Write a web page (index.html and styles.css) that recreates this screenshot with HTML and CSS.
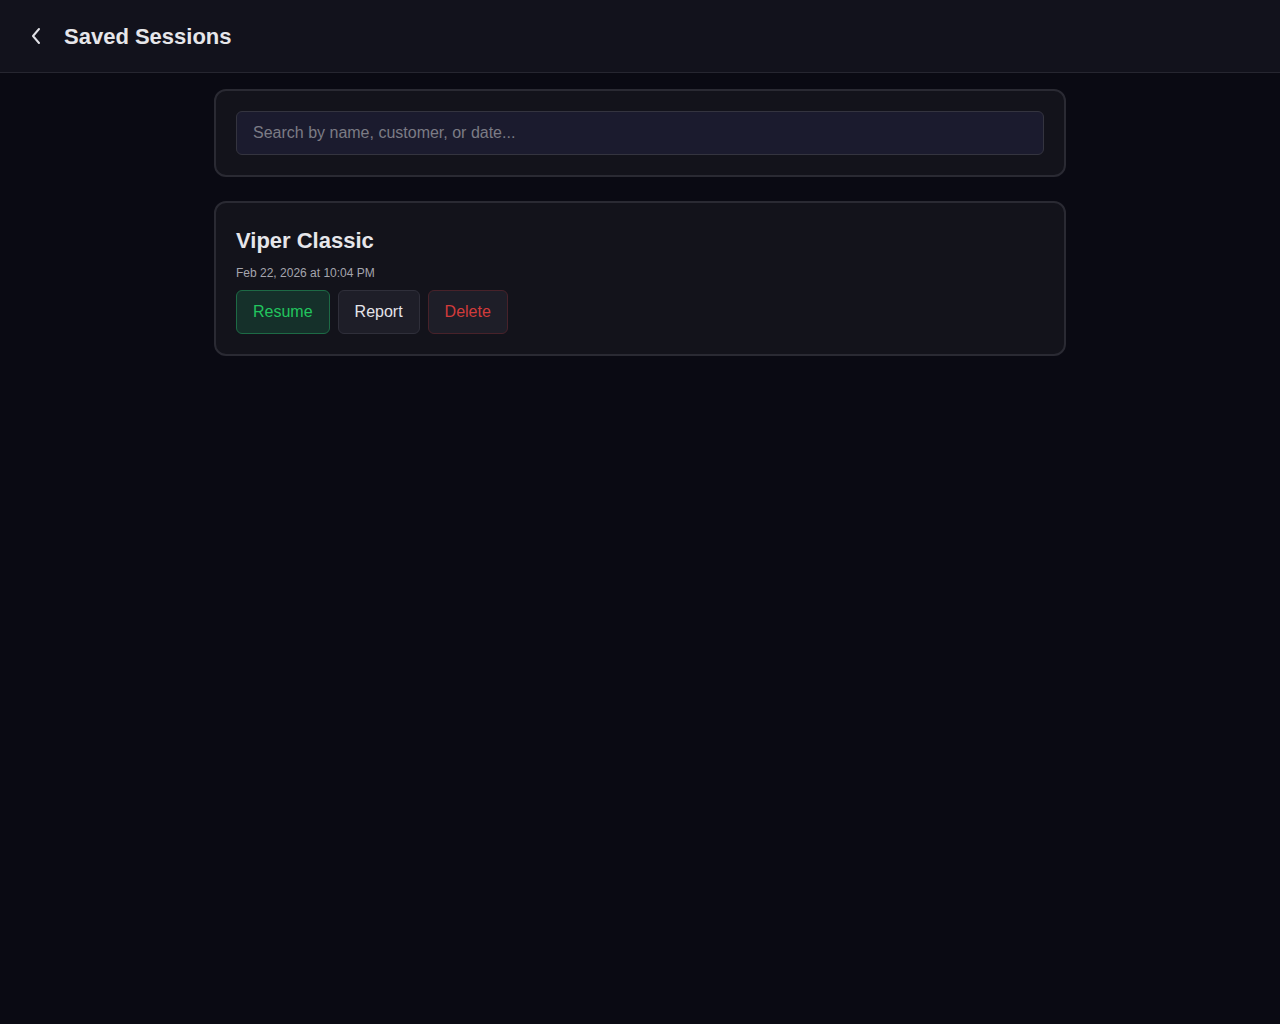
FILE: index.html
```html
<!DOCTYPE html>
<html lang="en">
<head>
<meta charset="utf-8">
<title>Saved Sessions</title>
<link rel="stylesheet" href="styles.css">
</head>
<body>
<header class="topbar">
  <button class="back" aria-label="Back">
    <svg width="12" height="18" viewBox="0 0 12 18" fill="none" stroke="currentColor" stroke-width="2" stroke-linecap="round" stroke-linejoin="round"><path d="M9 2 L3 9 L9 16"/></svg>
  </button>
  <h1 class="title">Saved Sessions</h1>
</header>
<main class="content">
  <section class="card search-card">
    <input class="search" type="text" placeholder="Search by name, customer, or date...">
  </section>
  <section class="card session">
    <h2 class="session-name">Viper Classic</h2>
    <div class="session-date">Feb 22, 2026 at 10:04 PM</div>
    <div class="actions">
      <button class="btn btn-resume">Resume</button>
      <button class="btn btn-report">Report</button>
      <button class="btn btn-delete">Delete</button>
    </div>
  </section>
</main>
</body>
</html>
```

FILE: styles.css
```css
* { box-sizing: border-box; }
html, body { margin: 0; padding: 0; }
body {
  background: #0a0a13;
  font-family: "Liberation Sans", Arial, sans-serif;
  color: #e6e6ea;
  min-height: 1024px;
}
.topbar {
  height: 73px;
  background: #12121c;
  border-bottom: 1px solid #262630;
  display: flex;
  align-items: center;
  padding-left: 24px;
  gap: 10px;
}
.back {
  background: none;
  border: none;
  color: #e0e0e6;
  width: 24px;
  height: 24px;
  padding: 0;
  display: flex;
  align-items: center;
  justify-content: center;
  cursor: pointer;
}
.title {
  margin: 2px 0 0 6px;
  font-size: 22px;
  font-weight: 700;
  color: #e6e6ea;
}
.content {
  width: 852px;
  margin: 16px auto 0;
  display: flex;
  flex-direction: column;
  gap: 24px;
}
.card {
  background: #13131b;
  border: 2px solid #2a2a33;
  border-radius: 12px;
  padding: 20px;
}
.search {
  display: block;
  width: 100%;
  height: 44px;
  background: #1b1b2e;
  border: 1px solid #34343f;
  border-radius: 6px;
  padding: 0 16px;
  font-family: "Liberation Sans", Arial, sans-serif;
  font-size: 16px;
  color: #e6e6ea;
  outline: none;
}
.search::placeholder { color: #7b7b85; }
.session-name {
  margin: 2px 0 0;
  font-size: 22px;
  line-height: 32px;
  font-weight: 700;
  color: #e6e6ea;
}
.session-date {
  margin-top: 8px;
  font-size: 12px;
  line-height: 16px;
  color: #a5a5ae;
}
.actions {
  display: flex;
  gap: 8px;
  margin-top: 9px;
}
.btn {
  height: 44px;
  padding: 0 16px;
  border-radius: 6px;
  font-family: "Liberation Sans", Arial, sans-serif;
  font-size: 16px;
  cursor: pointer;
  border: 1px solid #2f2f3a;
  background: #1e1e28;
  color: #e4e4ea;
}
.btn-resume {
  background: #15302a;
  border-color: #1d6a45;
  color: #22c55e;
}
.btn-delete {
  border-color: #48222a;
  color: #d23b3b;
}
```
